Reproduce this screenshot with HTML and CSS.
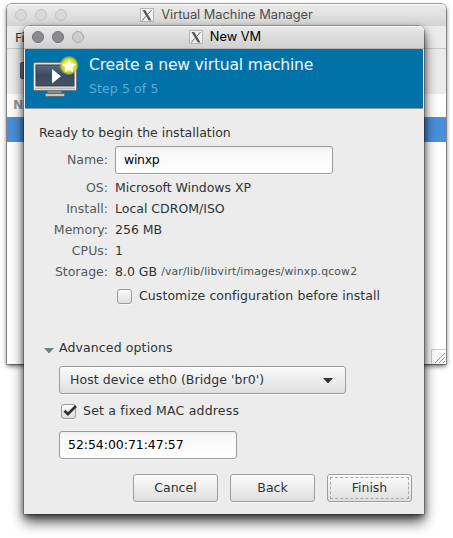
FILE: index.html
```html
<!DOCTYPE html>
<html lang="en">
<head>
<meta charset="utf-8">
<title>New VM</title>
<link rel="stylesheet" href="styles.css">
</head>
<body>
<svg class="defs" width="0" height="0">
  <symbol id="xlogo" viewBox="0 0 14 14">
    <rect x=".5" y=".5" width="13" height="13" fill="#f0f0f0" stroke="#b5b5b5"/>
    <path d="M2.500 2h2.700L11.500 12.500H8.800z" fill="currentColor"/>
    <path d="M11.500 2 8 6M5.700 8.400 2.300 12.500" stroke="currentColor" stroke-width=".9" fill="none"/>
  </symbol>
</svg>
<div class="window manager">
  <div class="titlebar">
    <div class="lights"><i></i><i></i><i></i></div>
    <div class="title"><svg width="14" height="14"><use href="#xlogo"/></svg><span class="title-text">Virtual Machine Manager</span></div>
  </div>
  <div class="menubar"><span>File</span></div>
  <div class="toolbar"><span class="tool"></span></div>
  <div class="column-head"><span>Name</span></div>
  <div class="selected-row"></div>
  <div class="list">
    <svg class="grip" width="15" height="15" viewBox="0 0 15 15"><path d="M.5 15V.5H15" fill="none" stroke="#ccc"/><path d="M4 14 14 4M8 14l6-6M12 14l2-2" stroke="#888" stroke-width="1"/></svg>
  </div>
</div>

<div class="window dialog">
  <div class="titlebar">
    <div class="lights"><i class="dark"></i><i class="dark"></i><i></i></div>
    <div class="title"><svg width="14" height="14"><use href="#xlogo"/></svg><span class="title-text">New VM</span></div>
  </div>
  <div class="banner">
    <svg class="vm-icon" width="46" height="44" viewBox="0 0 46 44">
      <defs>
        <linearGradient id="frame" x1="0" y1="0" x2="0" y2="1"><stop offset="0" stop-color="#e0e0e0"/><stop offset="1" stop-color="#fafafa"/></linearGradient>
        <linearGradient id="screen" x1="0" y1="0" x2="0" y2="1"><stop offset="0" stop-color="#5b6b80"/><stop offset=".5" stop-color="#3b4a60"/><stop offset="1" stop-color="#465467"/></linearGradient>
        <radialGradient id="glow"><stop offset="0" stop-color="#fffb50"/><stop offset=".6" stop-color="#e6e820"/><stop offset=".8" stop-color="#bcd32b" stop-opacity=".8"/><stop offset="1" stop-color="#7ab060" stop-opacity="0"/></radialGradient>
      </defs>
      <path d="M15 35h13l1 4H14z" fill="#8b8d8c"/>
      <rect x="12.500" y="38.500" width="19" height="3" rx="1" fill="#c6c7c5" stroke="#676a6b"/>
      <rect x=".5" y="7.500" width="43" height="28" rx="1.500" fill="url(#frame)" stroke="#777978"/>
      <path d="M2 32.500h40v2H2z" fill="#b5b6b4"/>
      <rect x="3" y="10" width="38" height="21" fill="url(#screen)" stroke="#303c4d"/>
      <path d="M19 14v14.500l9-7.250z" fill="#fff"/>
      <circle cx="36" cy="10.500" r="10" fill="url(#glow)"/>
      <path d="m36 4 2 4.600 5 .5-3.800 3.300 1.200 5-4.400-2.700-4.400 2.700 1.200-5L29 9.100l5-.5z" fill="#fff"/>
    </svg>
    <div class="banner-text"><span class="headline">Create a new virtual machine</span><span class="step">Step 5 of 5</span></div>
  </div>
  <div class="content">
    <div class="ready"><span>Ready to begin the installation</span></div>
    <div class="summary">
      <label>Name:</label><div class="field name"><span>winxp</span></div>
      <label>OS:</label><div><span class="os">Microsoft Windows XP</span></div>
      <label>Install:</label><div><span>Local CDROM/ISO</span></div>
      <label>Memory:</label><div><span>256 MB</span></div>
      <label>CPUs:</label><div><span>1</span></div>
      <label>Storage:</label><div class="storage"><span>8.0 GB</span><span class="path">/var/lib/libvirt/images/winxp.qcow2</span></div>
    </div>
    <div class="check-row customize"><span class="box"></span><span>Customize configuration before install</span></div>
    <div class="expander"><svg width="10" height="5" viewBox="0 0 10 5"><path d="M0 0h10L5.500 5h-1z" fill="#6f8085"/></svg><span>Advanced options</span></div>
    <div class="combo"><span>Host device eth0 (Bridge 'br0')</span><svg width="10" height="5" viewBox="0 0 10 5"><path d="M0 0h10L5.500 5h-1z" fill="#2e3436"/></svg></div>
    <div class="check-row mac-check"><span class="box"><svg width="16" height="14" viewBox="0 0 16 14"><path d="M2.500 5.800 5.900 9.200 14 1" fill="none" stroke="#2e3436" stroke-width="2.700"/></svg></span><span>Set a fixed MAC address</span></div>
    <div class="field mac"><span>52:54:00:71:47:57</span></div>
    <div class="actions"><div class="button"><span>Cancel</span></div><div class="button"><span>Back</span></div><div class="button focus"><span>Finish</span></div></div>
  </div>
</div>
</body>
</html>
```

FILE: styles.css
```css
* { box-sizing: border-box; }
body { margin: 0; width: 453px; height: 538px; overflow: hidden; background: #fff; position: relative; font: 12.5px/20px "DejaVu Sans", sans-serif; color: #2e3436; white-space: nowrap; }
.defs { position: absolute; }
.window { position: absolute; display: flex; flex-direction: column; border-radius: 5px 5px 0 0; }
.manager { left: 7px; top: 4px; width: 439px; height: 360px; background: #ececec; box-shadow: 0 0 0 1px rgba(0,0,0,.3), 0 2px 5px rgba(0,0,0,.65); }
.dialog { left: 24px; top: 26px; width: 400px; height: 488px; background: #ececec; box-shadow: 0 0 0 .5px rgba(0,0,0,.45), 0 8px 14px rgba(0,0,0,.65), 0 3px 6px rgba(0,0,0,.5); }
.titlebar { height: 22px; flex: none; display: grid; grid-template-columns: 60px 1fr 60px; align-items: center; border-radius: 5px 5px 0 0; background: linear-gradient(#ececec, #d4d4d4); box-shadow: inset 0 1px #f8f8f8; }
.dialog .titlebar { height: 23px; border-bottom: 1px solid #b4b4b4; background: linear-gradient(#e9e9e9, #d0d0d0); }
.lights { display: flex; gap: 8px; padding-left: 8px; }
.lights i { width: 12px; height: 12px; border: 1px solid #c3c3c3; border-radius: 50%; background: #d8d8d8; }
.dialog .lights i { border-color: #a9a9a9; background: #cecece; }
.dialog .lights .dark { background: #8c8b90; border-color: #717075; }
.title { display: flex; align-items: center; justify-content: center; gap: 7px; color: #4d4d4d; font: 12.8px/20px Inter, sans-serif; }
.dialog .title { color: #000; padding-left: 2px; }
.title svg { color: #555; }
.menubar { height: 23px; padding-left: 8px; line-height: 23px; border-bottom: 1px solid #c9c9c9; }
.toolbar { height: 45px; padding: 13px; }
.tool { display: block; width: 20px; height: 17px; border: 1px solid #555; border-radius: 2px; background: #67758b; }
.column-head { height: 23px; background: #fff; padding-left: 6px; line-height: 21px; font-weight: bold; color: #929595; }
.selected-row { height: 25px; background: #4a90d9; }
.list { flex: 1; background: #fff; display: flex; align-items: flex-end; justify-content: flex-end; }
.banner { height: 60px; flex: none; margin: 0 1px; background: #0072a8; display: flex; border-bottom: 1px solid #999; }
.vm-icon { margin: 6px 0 0 8px; }
.banner-text { display: flex; flex-direction: column; align-items: flex-start; margin: 5px 0 0 10px; }
.headline { font-size: 15.6px; letter-spacing: -.22px; line-height: 22px; color: #f0f6fa; }
.step { line-height: 20px; margin-top: 3px; letter-spacing: .1px; color: #5ca9d9; }
.content { display: flex; flex-direction: column; align-items: flex-start; flex: 1; }
.ready { height: 20px; margin: 14px 0 0 15px; line-height: 20px; }
.summary { display: grid; grid-template-columns: 69px 1fr; column-gap: 7px; grid-template-rows: 31px; grid-auto-rows: 21px; margin: 3px 0 0 15px; }
.summary > * { line-height: 21px; }
.summary label { text-align: right; color: #555a5b; }
.summary label:first-child { line-height: 27px; }
.field { height: 28px; border: 1px solid #9a9a9a; border-radius: 3px; padding-left: 8px; color: #000; background: linear-gradient(#eee, #f8f8f8 4px, #fff); box-shadow: 0 1px #f7f7f7; }
.summary .field, .field { line-height: 26px; }
.name { width: 218px; letter-spacing: -.3px; }
.os { letter-spacing: -.04px; }
.mac { width: 178px; margin: 10px 0 0 35px; letter-spacing: -.05px; }
.storage { display: flex; gap: 4px; }
.path { font-size: 10.8px; letter-spacing: .2px; color: #4b5051; }
.check-row { display: flex; align-items: center; height: 20px; }
.customize { margin: 4px 0 0 93px; gap: 7px; letter-spacing: .08px; }
.box { width: 15px; height: 15px; border: 1px solid #9a9a9a; border-radius: 3px; background: linear-gradient(#fafafa, #dedede); box-shadow: 0 1px #f7f7f7; display: flex; }
.box svg { overflow: visible; flex: none; }
.expander { display: flex; align-items: center; gap: 5px; margin: 32px 0 0 20px; height: 20px; letter-spacing: .12px; }
.expander svg { margin-top: 5px; }
.combo { width: 287px; height: 28px; margin: 8px 0 0 35px; padding: 0 12px 0 10px; display: flex; align-items: center; justify-content: space-between; letter-spacing: .06px; }
.combo, .button { border: 1px solid #9c9c9c; border-radius: 3px; background: linear-gradient(#fbfbfb, #dfdfdf); box-shadow: inset 0 1px #fff, 0 1px #f5f5f5; }
.mac-check { margin: 7px 0 0 37px; gap: 7px; letter-spacing: .2px; }
.actions { display: flex; gap: 12px; margin: 15px 12px 0 109px; }
.button { width: 85px; height: 28px; line-height: 26px; text-align: center; }
.focus { outline: 1px dashed #aaa; outline-offset: -4px; }
```
